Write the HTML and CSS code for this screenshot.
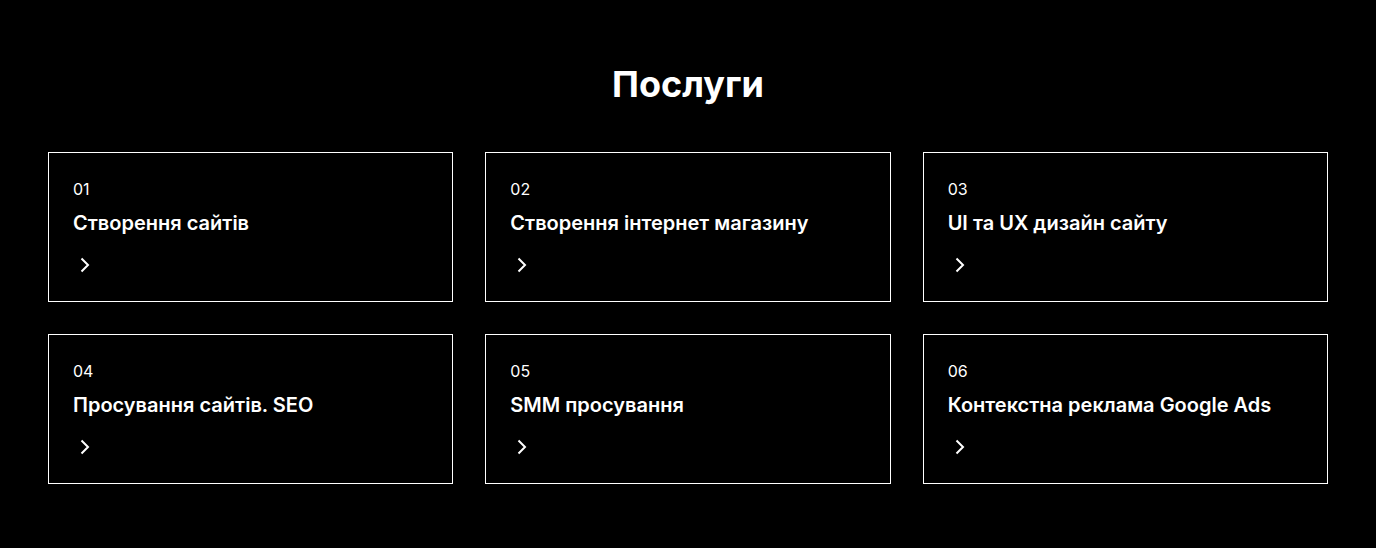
FILE: index.html
```html
<!DOCTYPE html>
<html lang="uk">
<head>
<meta charset="utf-8">
<meta name="viewport" content="width=device-width, initial-scale=1">
<title>Послуги</title>
<link rel="stylesheet" href="styles.css">
</head>
<body>
<section class="services">
  <h2 class="services-title">Послуги</h2>
  <div class="services-grid">
    <a class="card" href="#">
      <span class="card-number">01</span>
      <h3 class="card-title">Створення сайтів</h3>
      <svg class="card-icon" viewBox="0 0 24 24" aria-hidden="true"><path id="chevron" d="M8.5 5.5 15 12l-6.5 6.5"/></svg>
    </a>
    <a class="card" href="#">
      <span class="card-number">02</span>
      <h3 class="card-title">Створення інтернет магазину</h3>
      <svg class="card-icon" viewBox="0 0 24 24" aria-hidden="true"><use href="#chevron"/></svg>
    </a>
    <a class="card" href="#">
      <span class="card-number">03</span>
      <h3 class="card-title">UI та UX дизайн сайту</h3>
      <svg class="card-icon" viewBox="0 0 24 24" aria-hidden="true"><use href="#chevron"/></svg>
    </a>
    <a class="card" href="#">
      <span class="card-number">04</span>
      <h3 class="card-title">Просування сайтів. SEO</h3>
      <svg class="card-icon" viewBox="0 0 24 24" aria-hidden="true"><use href="#chevron"/></svg>
    </a>
    <a class="card" href="#">
      <span class="card-number">05</span>
      <h3 class="card-title">SMM просування</h3>
      <svg class="card-icon" viewBox="0 0 24 24" aria-hidden="true"><use href="#chevron"/></svg>
    </a>
    <a class="card" href="#">
      <span class="card-number">06</span>
      <h3 class="card-title">Контекстна реклама Google Ads</h3>
      <svg class="card-icon" viewBox="0 0 24 24" aria-hidden="true"><use href="#chevron"/></svg>
    </a>
  </div>
</section>
</body>
</html>
```
FILE: styles.css
```css
* {
  box-sizing: border-box;
}

body {
  margin: 0;
  background: #000;
  color: #fff;
  font-family: Inter, sans-serif;
  font-size: 16px;
  line-height: 24px;
}

.services {
  padding: 64px 48px;
}

.services-title {
  margin: 0 0 48px;
  font-size: 36px;
  line-height: 40px;
  font-weight: 700;
  text-align: center;
}

.services-grid {
  display: grid;
  grid-template-columns: repeat(3, 1fr);
  gap: 32px;
}

.card {
  display: flex;
  flex-direction: column;
  align-items: flex-start;
  padding: 24px;
  border: 1px solid #fff;
  color: inherit;
  text-decoration: none;
}

.card-title {
  margin: 8px 0 16px;
  font-size: 20px;
  line-height: 28px;
  font-weight: 600;
}

.card-number {
  display: block;
}

.card-icon {
  width: 24px;
  height: 24px;
  fill: none;
  stroke: currentColor;
  stroke-width: 2;
}
```
